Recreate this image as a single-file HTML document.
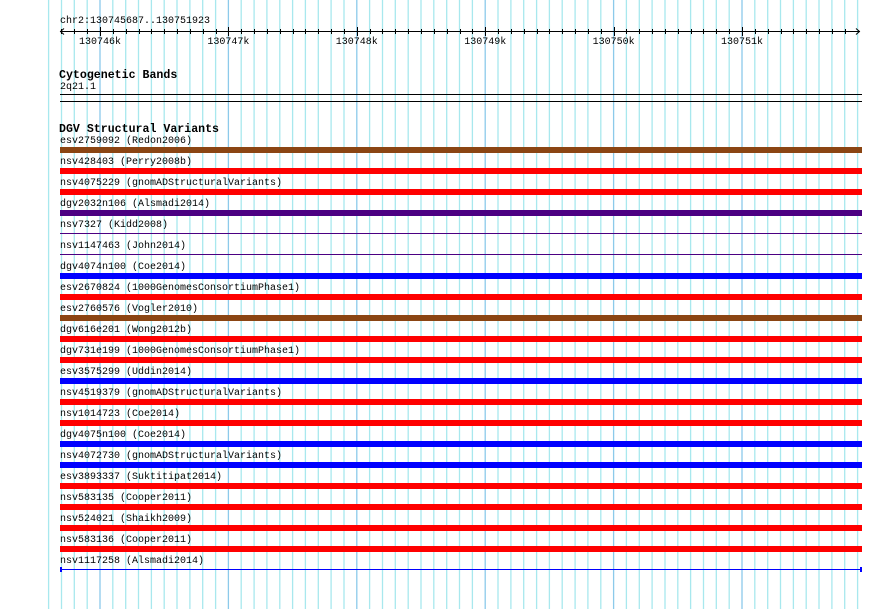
<!DOCTYPE html>
<html><head><meta charset="utf-8"><style>
body{margin:0;width:890px;height:609px;background:#fff;position:relative;overflow:hidden;font-family:"Liberation Mono",monospace;}
svg{position:absolute;left:0;top:0}
.t{position:absolute;font-size:10px;line-height:11px;color:#000;white-space:pre}
.h{position:absolute;font-size:11.6px;font-weight:bold;line-height:12px;white-space:pre}
</style></head><body>
<svg id="s" width="890" height="609"></svg>
<div class="t" style="left:60px;top:16px">chr2:130745687..130751923</div>
<div class="h" style="left:59px;top:70px">Cytogenetic Bands</div>
<div class="t" style="left:60px;top:82px">2q21.1</div>
<div class="h" style="left:59px;top:124px">DGV Structural Variants</div>
<div id="rows"></div>
<script>
var s=document.getElementById('s'),h='';
for(var k=-4;k<=59;k++){var x=100+12.84*k;if(x>859)break;var m=(k%10==0);
h+='<line x1="'+x.toFixed(1)+'" y1="0" x2="'+x.toFixed(1)+'" y2="609" stroke="'+(m?'#8ccaea':'#a8e8ee')+'" stroke-width="1.3"/>';}
h+='<line x1="60" y1="31.5" x2="860" y2="31.5" stroke="#000"/>';
h+='<path d="M64 28.5L60.5 31.5L64 34.5M856 28.5L859.5 31.5L856 34.5" fill="none" stroke="#000"/>';
for(var k=-3;k<=59;k++){var x=Math.round(100+12.84*k)+0.5;if(x>858)break;var m=(k%10==0);
h+='<line x1="'+x+'" y1="'+(m?27:29)+'" x2="'+x+'" y2="'+(m?36:34)+'" stroke="#000"/>';}
var labs=['130746k','130747k','130748k','130749k','130750k','130751k'];
for(var i=0;i<6;i++){h+='<text x="'+(100+128.4*i)+'" y="44" font-family="Liberation Mono,monospace" font-size="10" text-anchor="middle">'+labs[i]+'</text>';}
h+='<line x1="60" y1="94.5" x2="862" y2="94.5" stroke="#000"/><line x1="60" y1="101.5" x2="862" y2="101.5" stroke="#000"/>';
var rows=[['esv2759092 (Redon2006)','#8b4513',1],['nsv428403 (Perry2008b)','#ff0000',1],['nsv4075229 (gnomADStructuralVariants)','#ff0000',1],['dgv2032n106 (Alsmadi2014)','#4b0082',1],['nsv7327 (Kidd2008)','#4b0082',0],['nsv1147463 (John2014)','#4b0082',0],['dgv4074n100 (Coe2014)','#0000ff',1],['esv2670824 (1000GenomesConsortiumPhase1)','#ff0000',1],['esv2760576 (Vogler2010)','#8b4513',1],['dgv616e201 (Wong2012b)','#ff0000',1],['dgv731e199 (1000GenomesConsortiumPhase1)','#ff0000',1],['esv3575299 (Uddin2014)','#0000ff',1],['nsv4519379 (gnomADStructuralVariants)','#ff0000',1],['nsv1014723 (Coe2014)','#ff0000',1],['dgv4075n100 (Coe2014)','#0000ff',1],['nsv4072730 (gnomADStructuralVariants)','#0000ff',1],['esv3893337 (Suktitipat2014)','#ff0000',1],['nsv583135 (Cooper2011)','#ff0000',1],['nsv524021 (Shaikh2009)','#ff0000',1],['nsv583136 (Cooper2011)','#ff0000',1],['nsv1117258 (Alsmadi2014)','#0000ff',2]];
var d='';
for(var i=0;i<rows.length;i++){var y=136+21*i;
d+='<div class="t" style="left:60px;top:'+y+'px">'+rows[i][0]+'</div>';
var by=147+21*i;
if(rows[i][2]==1)h+='<rect x="60" y="'+by+'" width="802" height="6" fill="'+rows[i][1]+'"/>';
else{h+='<rect x="60" y="'+(by+2)+'" width="802" height="1" fill="'+rows[i][1]+'"/>';
if(rows[i][2]==2)h+='<rect x="60" y="'+by+'" width="2" height="5" fill="#0000ff"/><rect x="860" y="'+by+'" width="2" height="5" fill="#0000ff"/>';}}
s.innerHTML=h;document.getElementById('rows').innerHTML=d;
</script>
</body></html>
